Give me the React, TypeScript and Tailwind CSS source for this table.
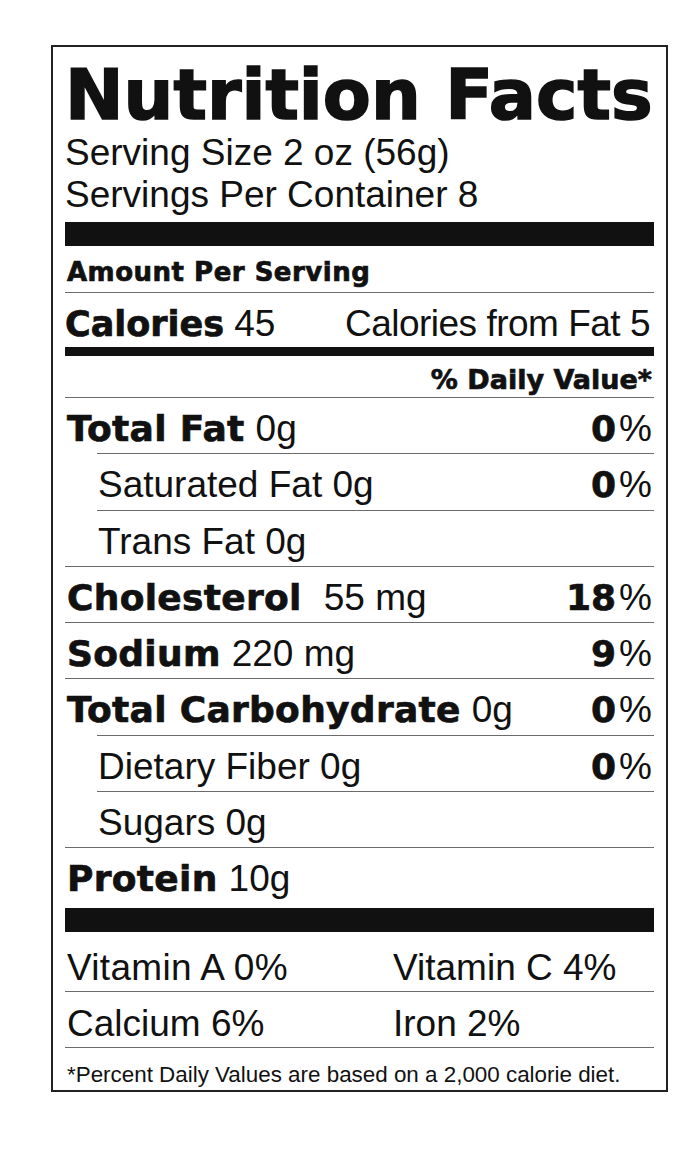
const heavy = "font-['DejaVu_Sans',sans-serif] font-bold [-webkit-text-stroke:0.7px_#111]";

interface NutrientRowProps {
  name: string;
  amount: string;
  percent?: string;
  sub?: boolean;
  gap?: boolean;
}

function NutrientRow({ name, amount, percent, sub, gap }: NutrientRowProps) {
  return (
    <div
      className={`flex h-[56.25px] items-baseline justify-between border-t border-[#6b6b6b] pt-[10px] leading-[42px] ${
        sub ? "ml-[32px]" : ""
      }`}
    >
      <div className="flex items-baseline">
        {sub ? (
          <span className="pl-px text-[37px]">
            {name} {amount}
          </span>
        ) : (
          <>
            <span className={`${heavy} pl-[2px] text-[36px] tracking-[0.3px]`}>{name}</span>
            <span className={`text-[37px] ${gap ? "ml-[22px]" : "ml-[11px]"}`}>{amount}</span>
          </>
        )}
      </div>
      {percent && (
        <div className="flex items-baseline pr-[2px]">
          <span className={`${heavy} text-[36px]`}>{percent}</span>
          <span className="ml-[3px] text-[37px]">%</span>
        </div>
      )}
    </div>
  );
}

export default function App() {
  return (
    <div className="min-h-[1158px] bg-white pl-[51px] pt-[45px] font-['Liberation_Sans',Arial,sans-serif] text-[#111]">
      <div className="h-[1047px] w-[617px] border-2 border-[#222] px-3 pt-[13px]">
        <h1
          className={`${heavy} h-[70px] text-[70px] leading-[70px] tracking-[0px] [-webkit-text-stroke:1.6px_#111]`}
        >
          Nutrition Facts
        </h1>
        <div className="mt-[2px] text-[37px] leading-[42px]">
          <div>Serving Size 2 oz (56g)</div>
          <div>Servings Per Container 8</div>
        </div>
        <div className="mt-[6px] h-[24px] bg-[#111]" />

        <div className={`${heavy} pb-[5px] pl-[2px] pt-[11px] text-[26px] leading-[30px] tracking-[0.5px]`}>
          Amount Per Serving
        </div>

        <div className="flex items-baseline justify-between border-t border-[#6b6b6b] pb-[2px] pt-[10px] leading-[41px]">
          <div className="flex items-baseline">
            <span className={`${heavy} text-[35px]`}>Calories</span>
            <span className="ml-[10px] text-[37px]">45</span>
          </div>
          <span className="pr-[4px] text-[37px] tracking-[-0.5px]">Calories from Fat 5</span>
        </div>
        <div className="h-[9px] bg-[#111]" />

        <div className={`${heavy} pb-[2px] pr-[2px] pt-[8px] text-right text-[27px] leading-[31px]`}>
          % Daily Value*
        </div>

        <NutrientRow name="Total Fat" amount="0g" percent="0" />
        <NutrientRow name="Saturated Fat" amount="0g" percent="0" sub />
        <NutrientRow name="Trans Fat" amount="0g" sub />
        <NutrientRow name="Cholesterol" amount="55 mg" percent="18" gap />
        <NutrientRow name="Sodium" amount="220 mg" percent="9" />
        <NutrientRow name="Total Carbohydrate" amount="0g" percent="0" />
        <NutrientRow name="Dietary Fiber" amount="0g" percent="0" sub />
        <NutrientRow name="Sugars" amount="0g" sub />
        <NutrientRow name="Protein" amount="10g" />

        <div className="mt-[5px] h-[24px] bg-[#111]" />

        <div className="flex border-b border-[#6b6b6b] pb-[2px] pl-[2px] pt-[15px] text-[37px] leading-[42px]">
          <span className="w-[326px] tracking-[0.3px]">Vitamin A 0%</span>
          <span>Vitamin C 4%</span>
        </div>
        <div className="flex border-b border-[#6b6b6b] pb-[2px] pl-[2px] pt-[11px] text-[37px] leading-[42px]">
          <span className="w-[326px]">Calcium 6%</span>
          <span>Iron 2%</span>
        </div>
        <div className="pl-[2px] pt-[14px] text-[22.4px] leading-[26px]">
          *Percent Daily Values are based on a 2,000 calorie diet.
        </div>
      </div>
    </div>
  );
}
